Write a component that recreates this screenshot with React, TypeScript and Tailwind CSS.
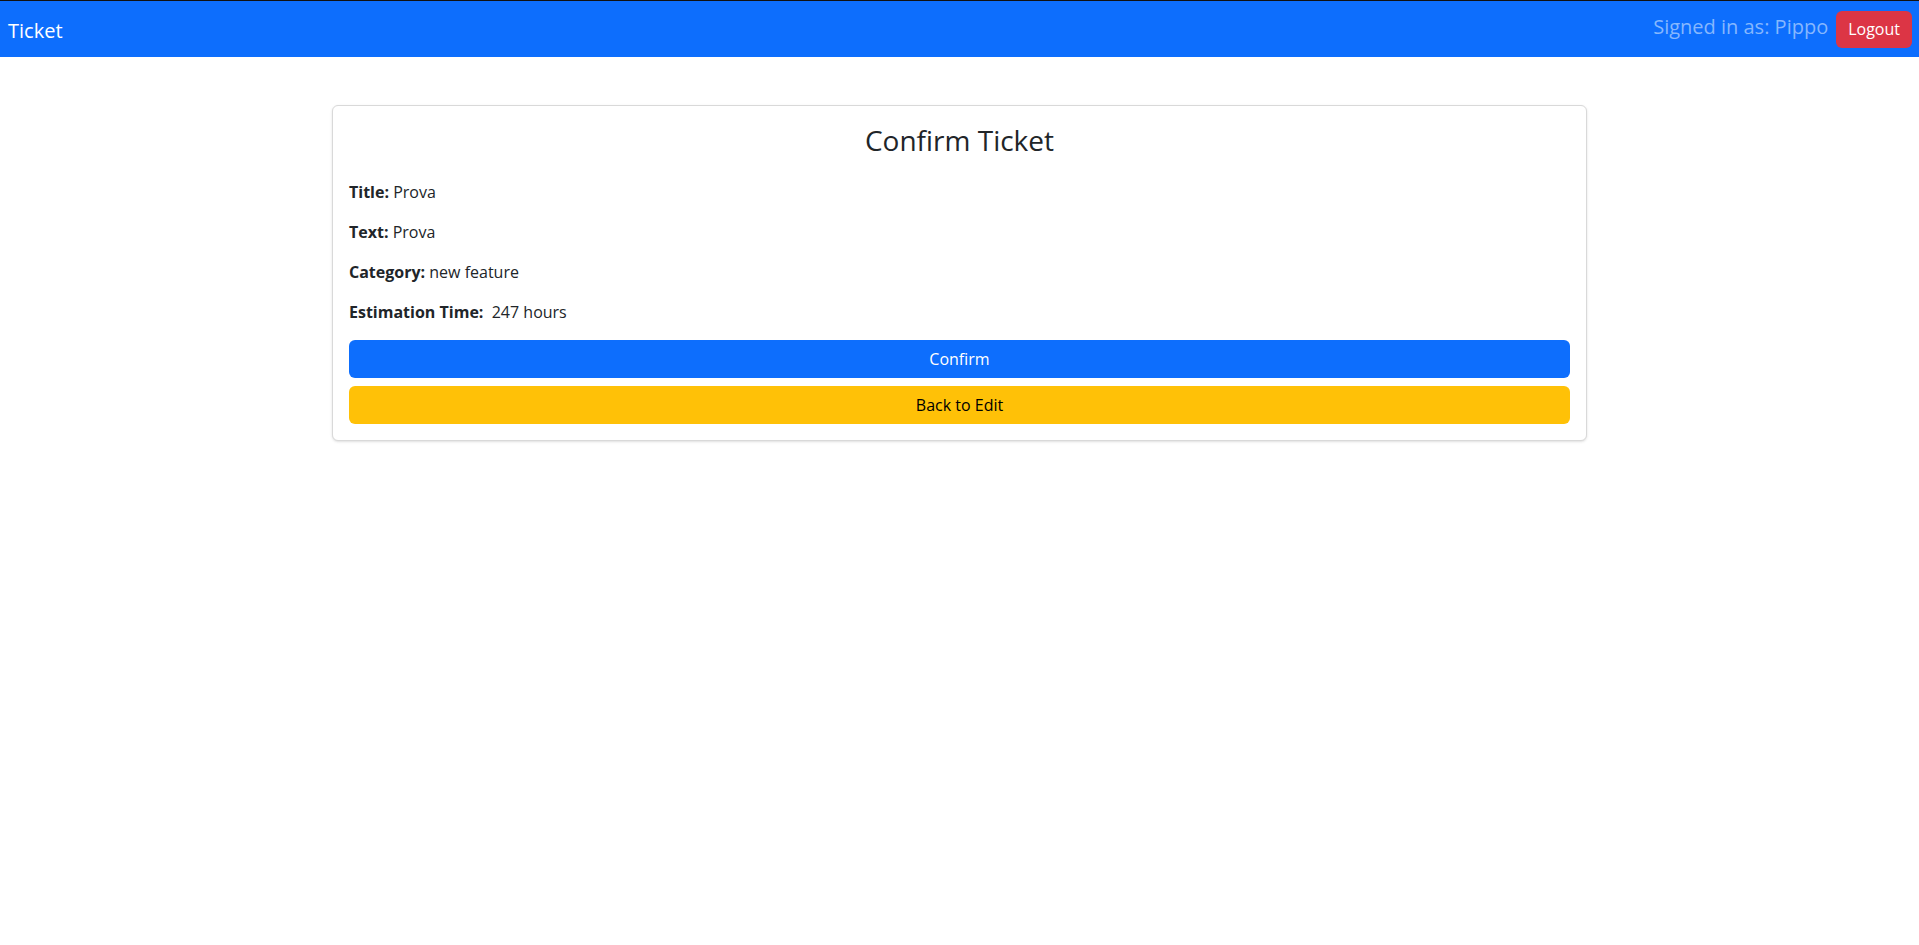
export default function App() {
  return (
    <div className="min-h-screen bg-white text-[#212529] font-['Open_Sans',sans-serif]">
      {/* navbar */}
      <nav className="flex items-center justify-between border-t border-[#111] bg-[#0d6efd] h-[57px] pl-2 pr-[7px]">
        <span className="pt-1 text-[20px] text-white">Ticket</span>
        <div className="flex items-center gap-2">
          <span className="pb-1 text-[20px] text-[#86b7fe]">Signed in as: Pippo</span>
          <button className="h-[37px] rounded-md bg-[#dc3545] px-3 text-base text-white">
            Logout
          </button>
        </div>
      </nav>

      <div className="mx-auto mt-12 w-[1255px] rounded-md border border-[#d9d9d9] bg-white p-4 shadow-sm">
        <h3 className="mb-[22px] pt-0.5 text-center text-[28px] leading-[1.2]">Confirm Ticket</h3>
        <p className="mb-4 text-base leading-6">
          <b>Title:</b> Prova
        </p>
        <p className="mb-4 text-base leading-6">
          <b>Text:</b> Prova
        </p>
        <p className="mb-4 text-base leading-6">
          <b>Category:</b> new feature
        </p>
        <p className="mb-4 text-base leading-6">
          <b>Estimation Time:</b>&nbsp; 247 hours
        </p>
        <div className="flex flex-col gap-2">
          <button className="h-[38px] w-full rounded-md bg-[#0d6efd] text-base text-white">
            Confirm
          </button>
          <button className="h-[38px] w-full rounded-md bg-[#ffc107] text-base text-black">
            Back to Edit
          </button>
        </div>
      </div>
    </div>
  );
}
